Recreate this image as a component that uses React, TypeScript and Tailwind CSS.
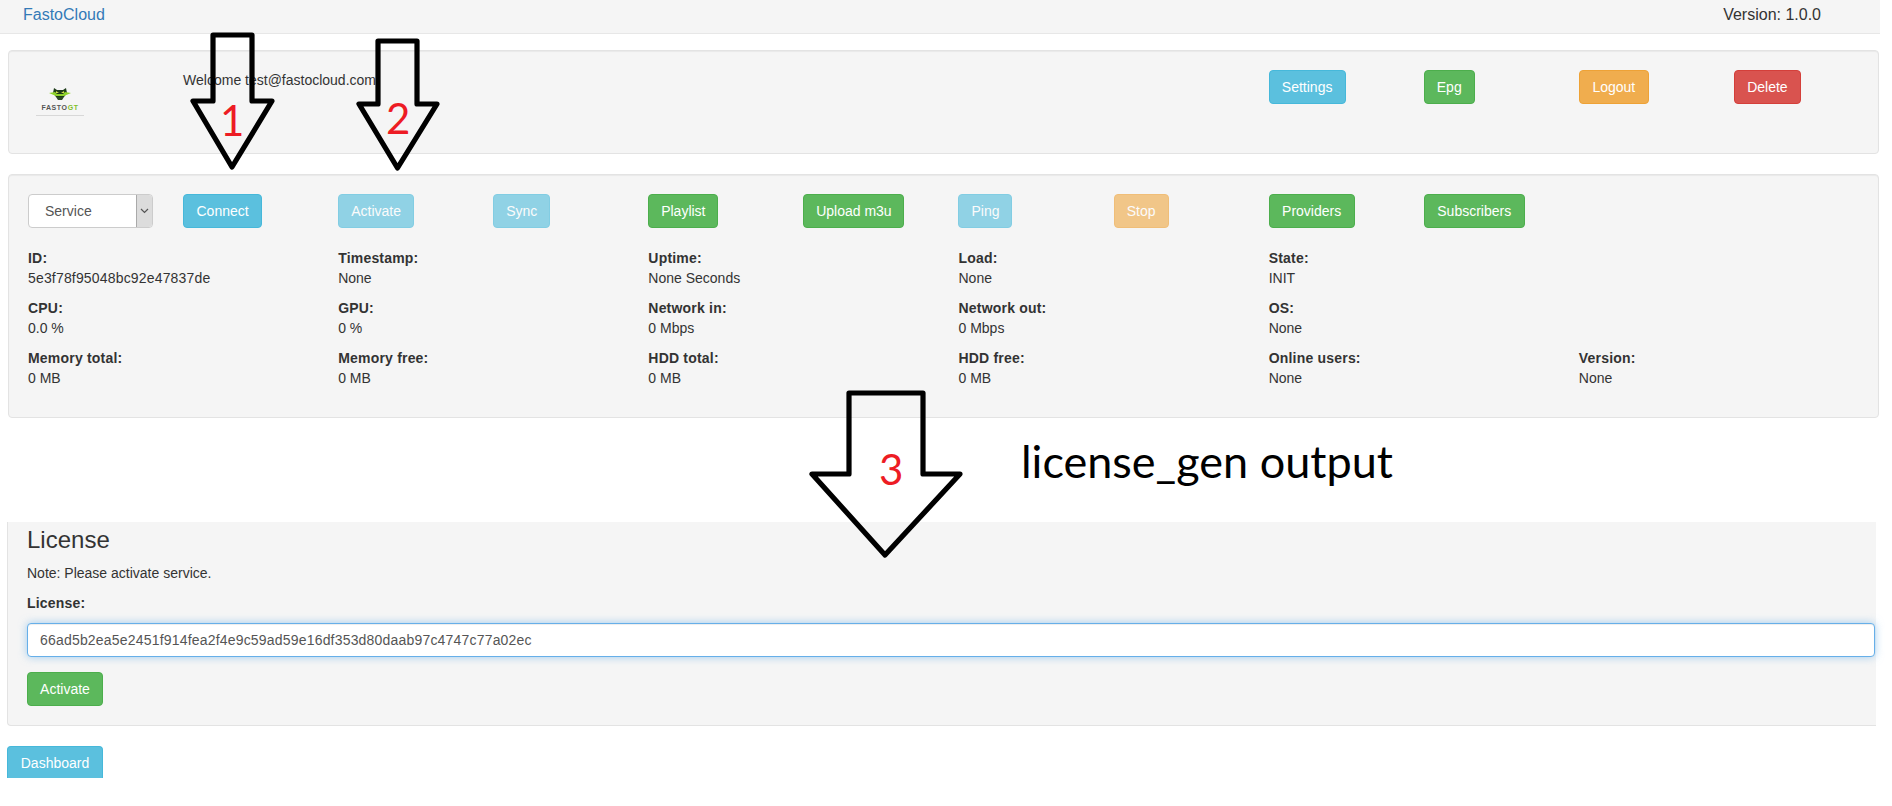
import React from 'react';

const btnBase = 'inline-flex h-[34px] items-center justify-center rounded border text-sm text-white';
const info = btnBase + ' bg-[#5bc0de] border-[#46b8da]';
const infoOff = btnBase + ' bg-[#5bc0de] border-[#46b8da] opacity-65';
const success = btnBase + ' bg-[#5cb85c] border-[#4cae4c]';
const warning = btnBase + ' bg-[#f0ad4e] border-[#eea236]';
const warningOff = btnBase + ' bg-[#f0ad4e] border-[#eea236] opacity-65';
const danger = btnBase + ' bg-[#d9534f] border-[#d43f3a]';

const well = 'rounded border border-[#e3e3e3] bg-[#f5f5f5] shadow-[inset_0_1px_1px_rgba(0,0,0,0.05)]';

const toolbar = [
  { label: 'Connect', cls: info + ' w-[79px]' },
  { label: 'Activate', cls: infoOff + ' w-[76px]' },
  { label: 'Sync', cls: infoOff + ' w-[57px]' },
  { label: 'Playlist', cls: success + ' w-[70px]' },
  { label: 'Upload m3u', cls: success + ' w-[101px]' },
  { label: 'Ping', cls: infoOff + ' w-[54px]' },
  { label: 'Stop', cls: warningOff + ' w-[55px]' },
  { label: 'Providers', cls: success + ' w-[86px]' },
  { label: 'Subscribers', cls: success + ' w-[101px]' },
];

const stats = [
  ['ID:', '5e3f78f95048bc92e47837de'],
  ['Timestamp:', 'None'],
  ['Uptime:', 'None Seconds'],
  ['Load:', 'None'],
  ['State:', 'INIT'],
  ['', ''],
  ['CPU:', '0.0 %'],
  ['GPU:', '0 %'],
  ['Network in:', '0 Mbps'],
  ['Network out:', '0 Mbps'],
  ['OS:', 'None'],
  ['', ''],
  ['Memory total:', '0 MB'],
  ['Memory free:', '0 MB'],
  ['HDD total:', '0 MB'],
  ['HDD free:', '0 MB'],
  ['Online users:', 'None'],
  ['Version:', 'None'],
];

const Logo = () => (
  <div className="flex w-[64px] flex-col items-center pt-[17px]">
    <svg width="22" height="14" viewBox="0 0 22 14">
      <path d="M5 1 L8 3 H14 L17 1 L18 6 L15 10 H7 L4 6 Z" fill="#1f3d1a" />
      <path d="M0 6 L6 5 L8 7 H14 L16 5 L22 6 L15 9 H7 Z" fill="#8fd42a" />
      <path d="M7 10 H15 L13 13 H9 Z" fill="#2c4a24" />
      <path d="M7 4 L10 6 L7 6 Z M15 4 L12 6 L15 6 Z" fill="#d6e04a" />
    </svg>
    <div className="mt-[3px] text-[7px] leading-[8px] font-bold tracking-[0.6px] text-[#555]">
      FASTO<span className="text-[#7fbf2a]">GT</span>
    </div>
    <div className="mt-[3px] h-px w-[48px] bg-[#d8d8d8]" />
  </div>
);

const Arrow = ({ points }: { points: string }) => (
  <svg className="pointer-events-none absolute left-0 top-0" width="1892" height="806">
    <polygon points={points} fill="none" stroke="#000" strokeWidth="5.2" strokeLinejoin="round" />
  </svg>
);

const Digit = ({ children, className }: { children: string; className: string }) => (
  <span className={"pointer-events-none absolute font-['Lato',sans-serif] text-[42px] leading-[42px] text-[#ed1c24] " + className}>
    {children}
  </span>
);

export default function App() {
  return (
    <div className="relative h-[806px] overflow-hidden bg-white font-['Liberation_Sans',Arial,sans-serif] text-sm text-[#333]">
      <nav className="mr-3 flex h-[34px] items-start justify-between border-b border-[#e7e7e7] bg-[#f5f5f5] pl-[23px] pr-[59px] text-base leading-[29px]">
        <span className="text-[#337ab7]">FastoCloud</span>
        <span>Version: 1.0.0</span>
      </nav>

      <div className={'ml-2 mr-[13px] mt-4 h-[104px] overflow-hidden p-[19px] ' + well}>
        <div className="-mr-[30px] grid grid-cols-12">
          <Logo />
          <div className="col-span-7 leading-5">Welcome test@fastocloud.com</div>
          <div><button className={info + ' w-[77px]'}>Settings</button></div>
          <div><button className={success + ' w-[51px]'}>Epg</button></div>
          <div><button className={warning + ' w-[70px]'}>Logout</button></div>
          <div><button className={danger + ' w-[67px]'}>Delete</button></div>
        </div>
      </div>

      <div className={'ml-2 mr-[13px] mt-5 h-[244px] overflow-hidden p-[19px] ' + well}>
        <div className="-mr-[30px] grid grid-cols-12">
          <div className="flex h-[34px] w-[125px] overflow-hidden rounded border border-[#ccc] bg-white text-[#555]">
            <span className="flex-1 pl-4 leading-[32px]">Service</span>
            <span className="flex w-[16px] items-center justify-center border-l border-[#aaa] bg-[#dcdcdc]">
              <svg width="9" height="6" viewBox="0 0 9 6">
                <path d="M1 1 L4.500 4.500 L8 1" fill="none" stroke="#555" strokeWidth="1.2" />
              </svg>
            </span>
          </div>
          {toolbar.map((b) => (
            <div key={b.label}>
              <button className={b.cls}>{b.label}</button>
            </div>
          ))}
        </div>
        <div className="-mr-[30px] mt-5 grid grid-cols-6">
          {stats.map((s, i) => (
            <div key={i} className="h-[50px] leading-5">
              <div className="font-bold tracking-[0.2px]">{s[0]}</div>
              <div className={s[0] === 'ID:' ? 'tracking-[0.17px]' : ''}>{s[1]}</div>
            </div>
          ))}
        </div>
      </div>

      <div className="ml-[7px] mr-[16px] mt-[104px] h-[204px] rounded-bl border-b border-l border-[#e3e3e3] bg-[#f5f5f5] pl-[19px] pr-px">
        <h3 className="h-9 text-2xl leading-[36px]">License</h3>
        <p className="mt-[5px] leading-5">Note: Please activate service.</p>
        <label className="mt-[10px] block font-bold leading-5 tracking-[0.2px]">License:</label>
        <input
          readOnly
          value="66ad5b2ea5e2451f914fea2f4e9c59ad59e16df353d80daab97c4747c77a02ec"
          className="mt-[10px] block h-[34px] w-full rounded border border-[#66afe9] bg-white px-3 text-sm tracking-[0.19px] text-[#555] shadow-[inset_0_1px_1px_rgba(0,0,0,0.075),0_0_8px_rgba(102,175,233,0.6)] outline-none"
        />
        <button className={'mt-[15px] w-[76px] ' + success}>Activate</button>
      </div>

      <div className="ml-[7px] mt-5">
        <button className="flex h-8 w-[96px] items-center justify-center rounded-t border border-b-0 border-[#46b8da] bg-[#5bc0de] text-sm text-white">
          Dashboard
        </button>
      </div>

      <Arrow points="213,35 252,35 252,101 272,101 232,167 193,101 213,101" />
      <Arrow points="378,41 417,41 417,104 437,104 397.500,168 359,104 378,104" />
      <Arrow points="849,393 923,393 923,474 960,474 885,555 812,474 849,474" />
      <Digit className="left-[220px] top-[99px]">1</Digit>
      <Digit className="left-[386px] top-[97px]">2</Digit>
      <Digit className="left-[879px] top-[448px]">3</Digit>
      <span className="pointer-events-none absolute left-[1021px] top-[434px] font-['Lato',sans-serif] text-[45px] leading-[54px] text-black">
        license_gen output
      </span>
    </div>
  );
}
